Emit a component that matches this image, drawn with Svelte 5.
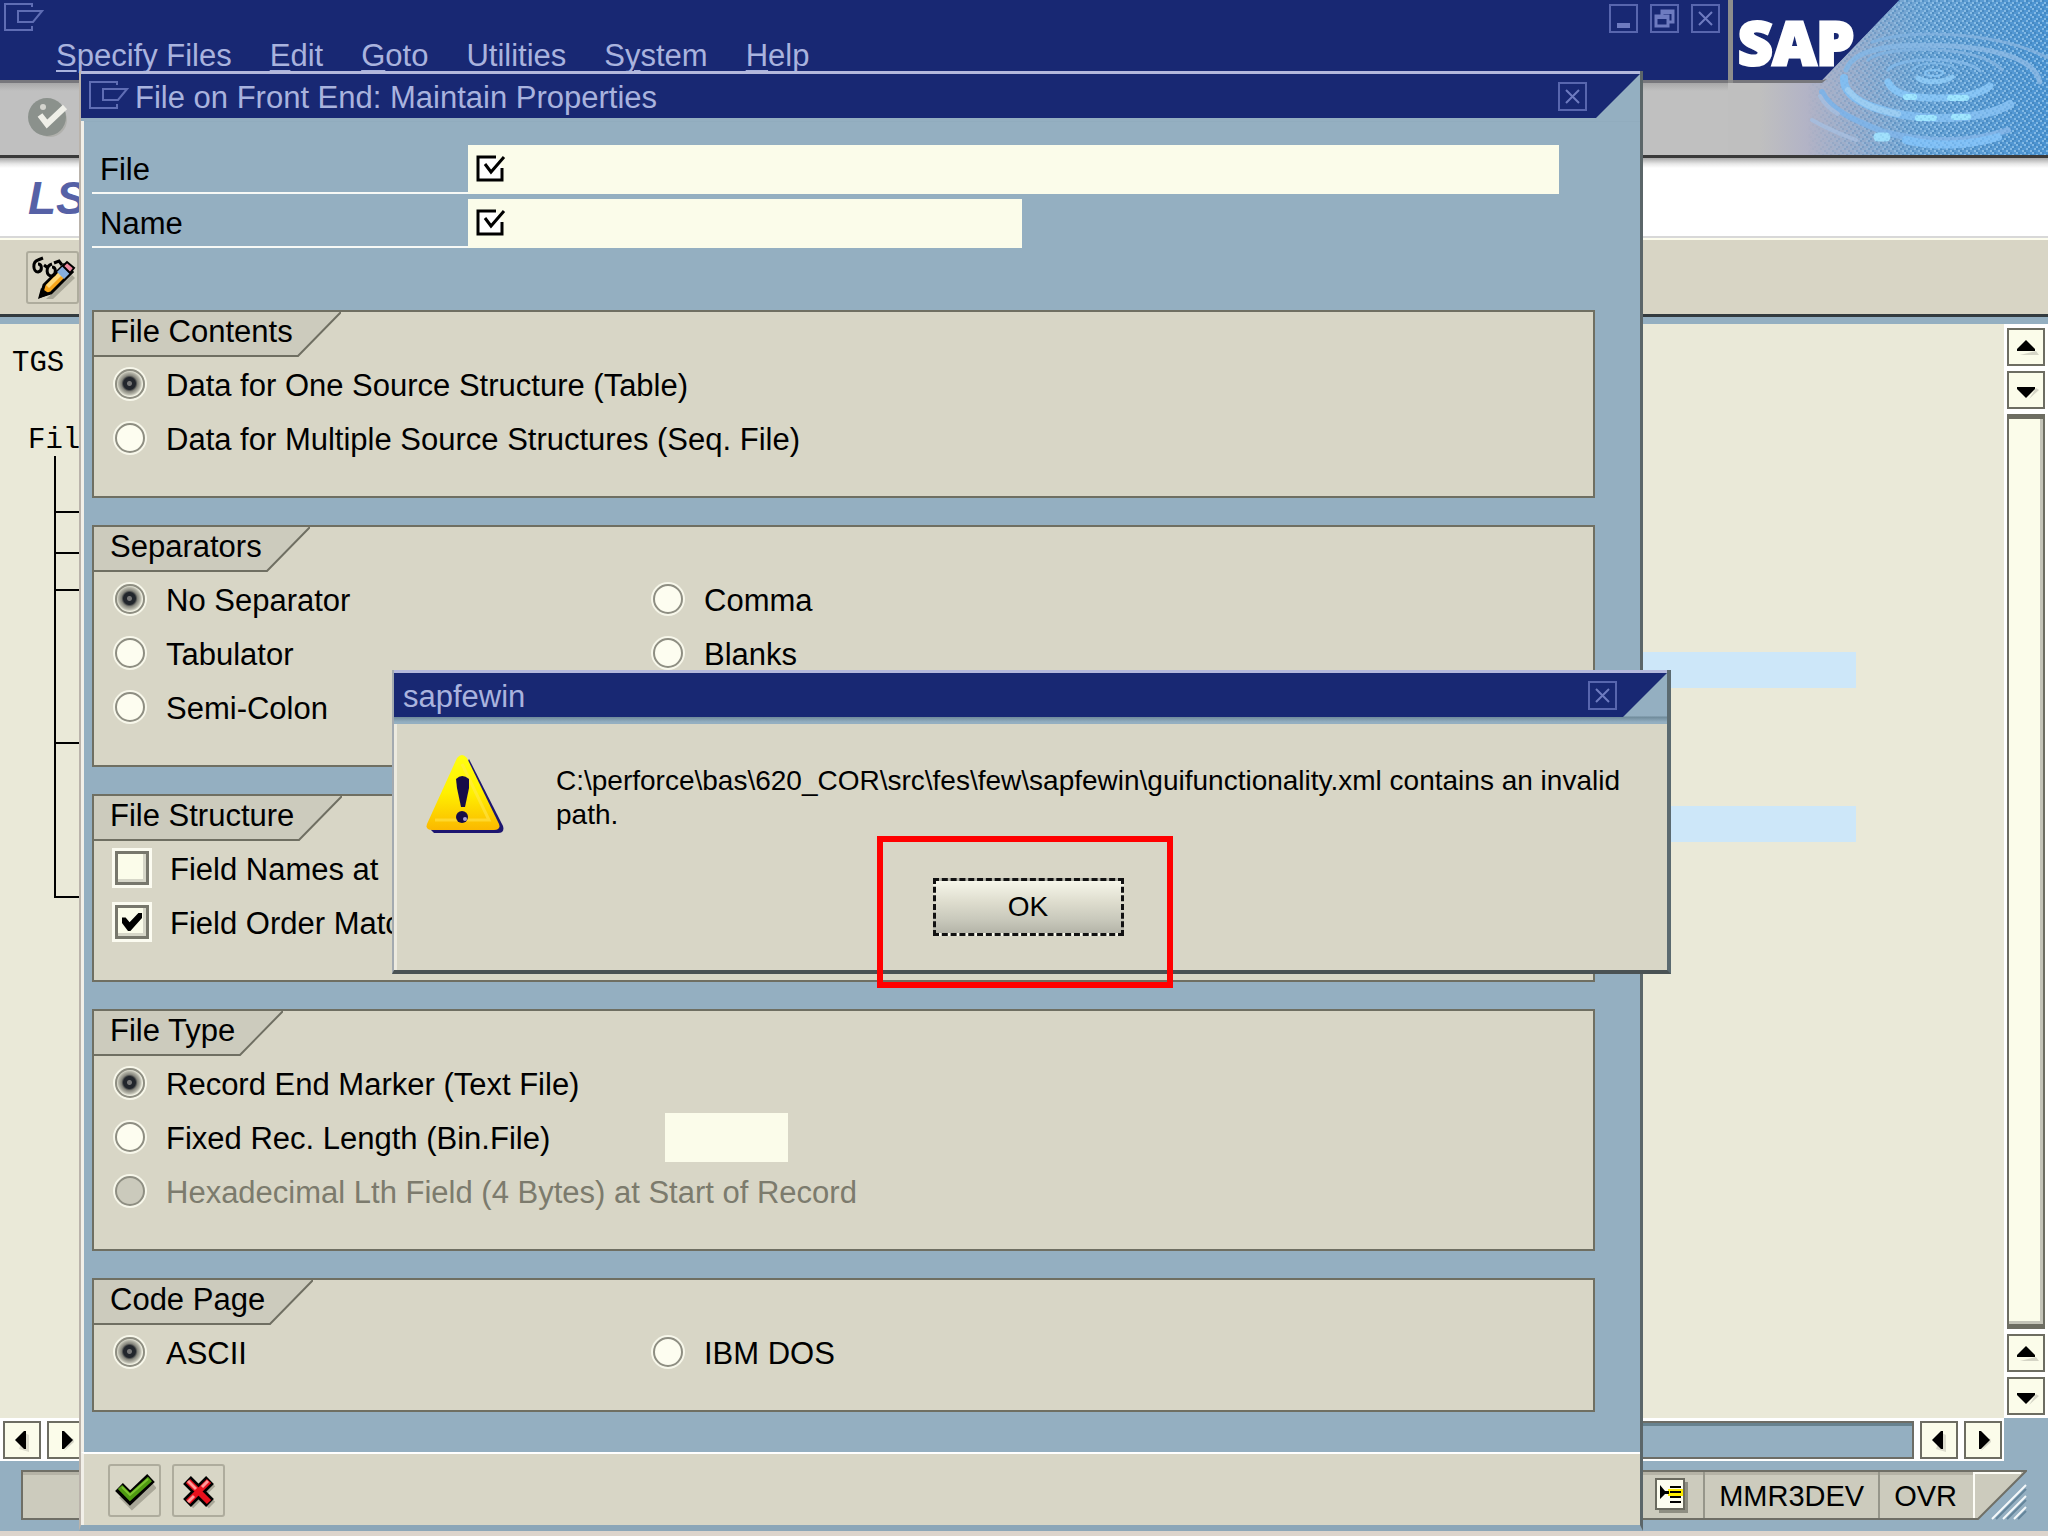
<script>
  const menus = [
    ['', 'S', 'pecify Files'],
    ['', 'E', 'dit'],
    ['', 'G', 'oto'],
    ['Utilities', '', ''],
    ['S', 'y', 'stem'],
    ['', 'H', 'elp']
  ];

  let contents = $state('one');
  let separator = $state('none');
  let fileType = $state('text');
  let codePage = $state('ascii');
  let namesAtStart = $state(false);
  let orderMatches = $state(true);
</script>

{#snippet windowGlyph()}
  <svg class="glyph" width="40" height="30" viewBox="0 0 40 30" aria-hidden="true">
    <path d="M28 4V1H1v26h27v-4M14 8h24l-9 11H14z" fill="none" stroke="currentColor" stroke-width="2" />
  </svg>
{/snippet}

{#snippet closeGlyph()}
  <svg width="25" height="25" viewBox="0 0 25 25" aria-hidden="true">
    <path d="M6 6l13 13M19 6L6 19" stroke="currentColor" stroke-width="2" />
  </svg>
{/snippet}

{#snippet arrow(dir)}
  <button class="arrow" aria-label={'Scroll ' + dir}>
    <svg width="34" height="34" viewBox="0 0 34 34" aria-hidden="true">
      {#if dir === 'up'}
        <path d="M11 25h19l-3-4z" fill="#d5d5c6" /><path d="M8 21v-2l9-9 9 9v2z" />
      {:else if dir === 'down'}
        <path d="M20 26l10-9-3-2z" fill="#d5d5c6" /><path d="M8 14v2l9 9 9-9v-2z" />
      {:else if dir === 'left'}
        <path d="M14 26l10 3V12l-4-2z" fill="#dcdccd" /><path d="M21 8h-2l-9 9 9 9h2z" />
      {:else}
        <path d="M15 28l10-9-1-4z" fill="#d5d5c6" /><path d="M13 8h2l9 9-9 9h-2z" />
      {/if}
    </svg>
  </button>
{/snippet}

{#snippet tab(title)}
  <div class="tab">
    <h2>{title}</h2>
    <svg width="44" height="45" viewBox="0 0 44 45" aria-hidden="true">
      <path d="M0 0h43L1 44H0z" fill="#cccbbd" />
      <path d="M0 44h1L44 0" fill="none" stroke="#6f6f62" stroke-width="2" />
    </svg>
  </div>
{/snippet}

{#snippet requiredMark()}
  <svg width="30" height="28" viewBox="0 0 30 28" aria-hidden="true">
    <path d="M20 2H2v23h24V13" fill="#fff" stroke="#000" stroke-width="3" />
    <path d="M9 9l6 8L28 2" fill="none" stroke="#000" stroke-width="3" />
  </svg>
{/snippet}

<div class="app">
  <header class="menubar">
    <div class="main-glyph">{@render windowGlyph()}</div>
    <nav>
      {#each menus as [before, key, after]}
        <button>{before}{#if key}<u>{key}</u>{/if}{after}</button>
      {/each}
    </nav>
    <div class="window-buttons">
      <button class="winbtn" aria-label="Minimize">
        <svg width="25" height="25" viewBox="0 0 25 25"><path d="M6 17h13v5H6z" fill="currentColor" /></svg>
      </button>
      <button class="winbtn" aria-label="Restore">
        <svg width="25" height="25" viewBox="0 0 25 25">
          <path d="M10 10V5h11v11h-5M4 10h12v10H4z" fill="none" stroke="currentColor" stroke-width="3" />
          <path d="M9 4h13v4H9zM3 9h14v4H3z" fill="currentColor" />
        </svg>
      </button>
      <button class="winbtn" aria-label="Close">{@render closeGlyph()}</button>
    </div>
    <svg class="banner" width="320" height="155" viewBox="0 0 320 155" role="img" aria-label="SAP">
      <defs>
        <linearGradient id="water" x1="0" x2="1" y1="0" y2="0">
          <stop offset="0.1" stop-color="#bfbfbf" />
          <stop offset="0.25" stop-color="#b2b3c6" />
          <stop offset="0.4" stop-color="#98accb" />
          <stop offset="0.6" stop-color="#6aa3d4" />
          <stop offset="1" stop-color="#4a93d2" />
        </linearGradient>
        <linearGradient id="fade" x1="0" x2="1" y1="0" y2="0">
          <stop offset="0.25" stop-color="#000" />
          <stop offset="0.65" stop-color="#fff" />
        </linearGradient>
        <pattern id="dither" width="8" height="8" patternUnits="userSpaceOnUse">
          <path d="M0 0h2v2H0zM4 2h2v2H4zM2 4h2v2H2zM6 6h2v2H6z" fill="#a6d2f2" />
          <path d="M2 0h2v2H2zM6 2h2v2H6zM0 6h2v2H0zM4 4h2v2H4z" fill="#3d80b8" />
        </pattern>
        <mask id="fadeMask"><rect width="320" height="155" fill="url(#fade)" /></mask>
        <clipPath id="waterClip"><path d="M94 80L171 0h149v155H0V80z" /></clipPath>
      </defs>
      <path d="M94 80L171 0h149v155H0V80z" fill="url(#water)" />
      <g mask="url(#fadeMask)"><path d="M94 80L171 0h149v155H0V80z" fill="url(#dither)" opacity="0.5" /></g>
      <g fill="none" stroke-linecap="round" clip-path="url(#waterClip)">
        <ellipse cx="206" cy="73" rx="9" ry="3" stroke="#85c2f2" stroke-width="2" />
        <path d="M190 78c6 5 26 5 34-1" stroke="#8cc8f4" stroke-width="5" />
        <path d="M184 70c8-9 38-9 46 1" stroke="#7db6e6" stroke-width="2" />
        <path d="M160 82c6 14 28 16 50 16 24 0 42-4 52-12" stroke="#86c4f5" stroke-width="7" />
        <path d="M160 70c8-13 76-15 92 1" stroke="#80b6e6" stroke-width="3" />
        <path d="M116 78c-2 26 50 39 94 40 30 0 56-4 72-14" stroke="#82bdf0" stroke-width="8" />
        <path d="M140 60c16-15 112-16 134 10" stroke="#80b2e0" stroke-width="3" />
        <path d="M118 70c10-26 62-26 106-24 44 3 82 12 88 36" stroke="#85b5e2" stroke-width="5" />
        <path d="M120 90c12 15 30 20 50 24" stroke="#9ccdf2" stroke-width="6" />
        <path d="M178 97h8M222 98h16M190 118h16M226 117h14" stroke="#9fe6ff" stroke-width="6" />
        <path d="M94 92c8 18 32 28 62 40 44 12 90 10 124-2" stroke="#80b3e6" stroke-width="6" />
        <path d="M178 140c28 7 62 6 92-3" stroke="#80c0f6" stroke-width="8" />
        <path d="M150 137h8" stroke="#a0e0fc" stroke-width="9" />
        <path d="M144 42c40-14 126-10 176 16" stroke="#7fb0de" stroke-width="3" />
        <path d="M84 120c14 8 28 14 44 20M92 96c4 8 10 13 18 18" stroke="#a6bcdc" stroke-width="4" />
      </g>
      <g mask="url(#fadeMask)"><path d="M94 80L171 0h149v155H0V80z" fill="url(#dither)" opacity="0.18" /></g>
      <path d="M0 0h5v83H0z" fill="#8d8d8d" />
      <path d="M5 80h90l4-1-5 4H5z" fill="#77777c" />
      <path d="M5 0h166L94 80H5z" fill="#182873" />
      <text class="logo" x="10" y="65">SAP</text>
    </svg>
  </header>

  <div class="commandbar">
    <svg width="40" height="40" viewBox="0 0 40 40" role="img" aria-label="Enter">
      <circle cx="22" cy="23" r="17" fill="#b0b0ac" />
      <circle cx="19" cy="20" r="19" fill="#8b918c" />
      <circle cx="15" cy="10" r="3" fill="#d4d4ce" />
      <path d="M12 18l7 9L37 10" fill="none" stroke="#efefe8" stroke-width="6" />
    </svg>
  </div>
  <h1 class="page-title">LS</h1>
  <div class="toolbar">
    <button class="tool" aria-label="Display or change">
      <svg width="46" height="46" viewBox="0 0 46 46" aria-hidden="true">
        <path d="M16 44l26-24 3 3-22 21z" fill="#a9a798" />
        <path d="M11 41l3-11 20-20 8 7-21 21z" fill="#f6a51c" stroke="#000" stroke-width="3" />
        <path d="M16 30l14-14 3 3-14 14z" fill="#ffd97a" />
        <path d="M27 17l7-7 7 7-7 7z" fill="#86aede" />
        <path d="M33 11l4-4 7 6-4 5z" fill="#f08aa0" stroke="#000" stroke-width="2" />
        <path d="M8 44l3-11 9 6z" fill="#000" />
        <path d="M8 5c-6 2-5 12 0 12 5-1 4-8 0-8M14 10l4 3M22 9c-7 2-6 13 0 12 5-2 4-9 0-9M8 5l5-2M24 8l5-2 3 4" fill="none" stroke="#000" stroke-width="3" />
      </svg>
    </button>
  </div>

  <main class="workspace">
    <div class="tree">
      <p class="root">TGS</p>
      <p class="node">Fil</p>
      <svg width="60" height="442" viewBox="0 0 60 442" aria-hidden="true">
        <path d="M1 0v441h59M1 56h59M1 97h59M1 134h59M1 287h59" fill="none" stroke="#000" stroke-width="2" />
      </svg>
    </div>
    <div class="marks"><i></i><i></i></div>
    <div class="vscroll">
      {@render arrow('up')}
      {@render arrow('down')}
      <div class="thumb"></div>
      {@render arrow('up')}
      {@render arrow('down')}
    </div>
  </main>

  <div class="hscroll-row">
    <div class="hscroll">
      {@render arrow('left')}
      {@render arrow('right')}
      <div class="track"></div>
      {@render arrow('left')}
      {@render arrow('right')}
    </div>
  </div>

  <footer class="status">
    <div class="status-box">
      <div class="seg message"></div>
      <div class="seg">
        <svg width="34" height="36" viewBox="0 0 34 36" aria-hidden="true">
          <path d="M4 4h29v31H4z" fill="#8e8e82" />
          <path d="M1 1h28v30H1z" fill="#fdfdf0" stroke="#6b6b60" stroke-width="2" />
          <path d="M13 11h15v7H13z" fill="#ffee00" />
          <path d="M5 7v14l5-5h4v-3h-4zM15 8h11v2H15zM15 13h11v2H15zM15 18h11v2H15zM15 23h11v2H15z" />
        </svg>
      </div>
      <div class="seg">MMR3DEV</div>
      <div class="seg last">OVR</div>
    </div>
    <svg class="grip" width="54" height="50" viewBox="0 0 54 50" aria-hidden="true">
      <path d="M0 0h54L5 50H0z" fill="#cccbbd" />
      <path d="M0 1h53L5 49H0" fill="none" stroke="#6f6f66" stroke-width="2" />
      <path d="M1 48V3h47" fill="none" stroke="#fdfdf6" stroke-width="2" />
      <path d="M19 49l34-34M30 49l23-23M41 49l12-12" stroke="#f4f8fa" stroke-width="2" />
      <path d="M23 49l30-30M34 49l19-19M45 49l8-8" stroke="#64859b" stroke-width="2" />
    </svg>
  </footer>

  <section class="dialog" aria-label="File on Front End: Maintain Properties">
    <div class="titlebar">
      <div class="title-fill">
        {@render windowGlyph()}
        <span class="title">File on Front End: Maintain Properties</span>
        <button class="winbtn" aria-label="Close dialog">{@render closeGlyph()}</button>
      </div>
    </div>
    <form class="body" onsubmit={(e) => e.preventDefault()}>
      <div class="field">
        <label for="file">File</label>
        <div class="entry">{@render requiredMark()}<input id="file" type="text" /></div>
      </div>
      <div class="field">
        <label for="name">Name</label>
        <div class="entry short">{@render requiredMark()}<input id="name" type="text" /></div>
      </div>

      <div class="groups">
        <section class="group">
          {@render tab('File Contents')}
          <div class="rows">
            <label><input type="radio" value="one" bind:group={contents} /><span>Data for One Source Structure (Table)</span></label>
            <label><input type="radio" value="many" bind:group={contents} /><span>Data for Multiple Source Structures (Seq. File)</span></label>
          </div>
        </section>

        <section class="group">
          {@render tab('Separators')}
          <div class="rows two">
            <label><input type="radio" value="none" bind:group={separator} /><span>No Separator</span></label>
            <label><input type="radio" value="comma" bind:group={separator} /><span>Comma</span></label>
            <label><input type="radio" value="tab" bind:group={separator} /><span>Tabulator</span></label>
            <label><input type="radio" value="blank" bind:group={separator} /><span>Blanks</span></label>
            <label><input type="radio" value="semi" bind:group={separator} /><span>Semi-Colon</span></label>
          </div>
        </section>

        <section class="group">
          {@render tab('File Structure')}
          <div class="rows">
            <label><input type="checkbox" bind:checked={namesAtStart} /><span>Field Names at</span></label>
            <label><input type="checkbox" bind:checked={orderMatches} /><span>Field Order Matc</span></label>
          </div>
        </section>

        <section class="group">
          {@render tab('File Type')}
          <div class="rows">
            <label><input type="radio" value="text" bind:group={fileType} /><span>Record End Marker (Text File)</span></label>
            <div class="with-input">
              <label><input type="radio" value="bin" bind:group={fileType} /><span>Fixed Rec. Length (Bin.File)</span></label>
              <input class="length" type="text" aria-label="Record length" />
            </div>
            <label class="disabled"><input type="radio" value="hex" disabled bind:group={fileType} /><span>Hexadecimal Lth Field (4 Bytes) at Start of Record</span></label>
          </div>
        </section>

        <section class="group">
          {@render tab('Code Page')}
          <div class="rows two">
            <label><input type="radio" value="ascii" bind:group={codePage} /><span>ASCII</span></label>
            <label><input type="radio" value="dos" bind:group={codePage} /><span>IBM DOS</span></label>
          </div>
        </section>
      </div>
    </form>
    <div class="dialog-actions">
      <button class="tool" aria-label="Continue">
        <svg width="42" height="40" viewBox="0 0 42 40" aria-hidden="true">
          <path d="M8 24l10 10L40 14" fill="none" stroke="#a9a798" stroke-width="8" />
          <path d="M5 16l11 11L37 7" fill="none" stroke="#000" stroke-width="11" />
          <path d="M6 16l10 10L36 8" fill="none" stroke="#4f9a12" stroke-width="6" />
          <path d="M8 16l8 8L34 8" fill="none" stroke="#7cc330" stroke-width="2" />
        </svg>
      </button>
      <button class="tool" aria-label="Cancel">
        <svg width="42" height="40" viewBox="0 0 42 40" aria-hidden="true">
          <path d="M12 12l22 22M34 12L12 34" stroke="#a9a798" stroke-width="9" />
          <path d="M9 9l23 23M32 9L9 32" stroke="#000" stroke-width="11" />
          <path d="M10 10l21 21M31 10L10 31" stroke="#e8101c" stroke-width="6" />
          <path d="M10 10l8 8M30 10l-6 6M10 31l6-6" stroke="#ff9a9a" stroke-width="3" />
        </svg>
      </button>
    </div>
  </section>

  <section class="popup" role="alertdialog" aria-label="sapfewin">
    <div class="titlebar">
      <div class="title-fill">
        <span class="title">sapfewin</span>
        <button class="winbtn" aria-label="Close message">{@render closeGlyph()}</button>
      </div>
    </div>
    <div class="notice">
      <svg width="80" height="80" viewBox="0 0 80 80" role="img" aria-label="Warning">
        <defs>
          <linearGradient id="warn" x1="0" x2="0" y1="0" y2="1">
            <stop offset="0" stop-color="#ffff10" />
            <stop offset="0.5" stop-color="#fff000" />
            <stop offset="1" stop-color="#fbb800" />
          </linearGradient>
        </defs>
        <path d="M43 5l34 67q2 7-5 7H8l-3-3z" fill="#1d1670" />
        <path d="M31 4q5-6 10 0l32 66q2 6-5 6H6q-7 0-5-6z" fill="url(#warn)" />
        <path d="M36 10L63 66H9" fill="none" stroke="#ffe95a" stroke-width="3" opacity="0.5" />
        <path d="M30 25q6-6 13 0v9l-4 19h-4l-4-19z" fill="#160c48" />
        <circle cx="36" cy="63" r="6" fill="#160c48" />
        <circle cx="39" cy="65" r="2" fill="#a8a0d8" />
      </svg>
      <p>C:\perforce\bas\620_COR\src\fes\few\sapfewin\guifunctionality.xml contains an invalid path.</p>
    </div>
    <div class="popup-actions">
      <div class="callout"><button class="ok">OK</button></div>
    </div>
  </section>
</div>

<style>
  :global(body) {
    background: #fff;
  }
  * {
    box-sizing: border-box;
  }
  .app {
    position: relative;
    display: flex;
    flex-direction: column;
    min-height: 100vh;
    overflow: hidden;
    border-bottom: 5px solid #dcd4cc;
    background: #94afc1;
    font-family: 'Liberation Sans', Arial, sans-serif;
    font-size: 31px;
    line-height: 36px;
    color: #000;
  }
  button,
  input {
    font: inherit;
    color: inherit;
    margin: 0;
    padding: 0;
    border: 0;
    background: none;
    border-radius: 0;
  }
  svg {
    display: block;
    flex: none;
  }
  h1,
  h2,
  p {
    margin: 0;
    font-weight: normal;
    font-size: inherit;
  }

  .menubar {
    position: relative;
    display: flex;
    align-items: flex-start;
    height: 83px;
    background: #182873;
    border-bottom: 3px solid #77777c;
    color: #a9b3de;
  }
  .glyph {
    color: #5f6db4;
  }
  .main-glyph {
    padding: 3px 0 0 4px;
    width: 56px;
  }
  nav {
    display: flex;
    gap: 38px;
    padding-top: 38px;
    flex: 1;
  }
  nav u {
    text-decoration-thickness: 2px;
    text-underline-offset: 4px;
  }
  .window-buttons {
    display: flex;
    gap: 12px;
    padding: 4px 328px 0 0;
  }
  .winbtn {
    display: block;
    width: 29px;
    height: 29px;
    border: 2px solid #5866ae;
    color: #6e7bc0;
  }
  .banner {
    position: absolute;
    top: 0;
    right: 0;
    z-index: 1;
  }
  .logo {
    font-family: 'Open Sans', sans-serif;
    font-weight: 800;
    font-size: 60px;
    fill: #fff;
    stroke: #fff;
    stroke-width: 3px;
  }

  .commandbar {
    height: 75px;
    padding: 14px 28px;
    background: linear-gradient(#a8a8a8, #c0c0c0 8px);
    border-bottom: 3px solid #3a3a3a;
  }
  .page-title {
    height: 82px;
    padding: 12px 28px;
    line-height: 56px;
    font-size: 46px;
    font-weight: bold;
    font-style: italic;
    color: #5661a6;
    background: linear-gradient(#a8a8a8, #e8e8e8 6px, #fff 10px);
    border-bottom: 2px solid #fdfdee;
    box-shadow: inset 0 -2px #d8d8d8;
  }
  .toolbar {
    height: 77px;
    padding: 11px 26px;
    background: #d8d5c5;
    border-bottom: 3px solid #333b3f;
  }
  .tool {
    display: flex;
    align-items: center;
    justify-content: center;
    width: 53px;
    height: 53px;
    border: 2px solid #aeac9d;
    border-radius: 3px;
  }

  .workspace {
    display: flex;
    flex: 1;
    margin-top: 7px;
    background: #eae9d8;
  }
  .tree {
    font-family: 'Liberation Mono', monospace;
    font-size: 29px;
    line-height: 36px;
    padding: 22px 0 0 12px;
  }
  .node {
    padding: 41px 0 0 16px;
  }
  .tree svg {
    margin: -3px 0 0 42px;
  }
  .marks {
    flex: 1;
    display: flex;
    flex-direction: column;
    gap: 118px;
    padding: 328px 148px 0 0;
  }
  .marks i {
    height: 36px;
    background: #cde7f9;
  }
  .vscroll {
    display: flex;
    flex-direction: column;
    gap: 5px;
    width: 44px;
    padding: 4px 3px 3px;
    background: #fff;
  }
  .arrow {
    display: block;
    flex: none;
    width: 38px;
    height: 38px;
    border: 2px solid #6d6d62;
    background: #fbfcea;
  }
  .thumb {
    flex: 1;
    border: 2px solid #6d6d62;
    border-width: 5px 2px;
    background: #fbfcea;
    box-shadow: inset -3px -3px #c4c4b8;
  }
  .hscroll-row {
    padding-right: 44px;
  }
  .hscroll {
    display: flex;
    gap: 6px;
    padding: 3px 2px 2px 3px;
    background: #fff;
  }
  .track {
    flex: 1;
    border: 2px solid #6d6d66;
    background: #94afc1;
    box-shadow: inset 0 3px #67828f;
  }

  .status {
    display: flex;
    height: 70px;
    padding: 9px 21px 11px;
  }
  .status-box {
    display: flex;
    flex: 1;
    border: 2px solid #6f6f66;
    border-right: 0;
    background: #cccbbd;
    font-size: 29px;
  }
  .seg {
    display: flex;
    align-items: center;
    padding: 2px 14px 0;
    border-right: 2px solid #96968a;
    box-shadow: inset 0 3px #b5b3a6;
  }
  .message {
    flex: 1;
  }
  .last {
    border-right: 0;
    padding-right: 16px;
  }

  .titlebar {
    height: 50px;
    border-top: 3px solid #b3b8dc;
    background: #94afc1;
  }
  .title-fill {
    display: flex;
    align-items: center;
    height: 44px;
    padding-right: 53px;
    background: #182873;
    color: #a9b3de;
    clip-path: polygon(0 0, 100% 0, calc(100% - 44px) 100%, 0 100%);
  }
  .title {
    flex: 1;
    padding-top: 4px;
  }

  .dialog {
    position: absolute;
    top: 71px;
    left: 79px;
    right: 405px;
    bottom: 0;
    z-index: 2;
    display: flex;
    flex-direction: column;
    background: #94afc1;
    border-left: 2px solid #bab3ab;
    border-right: 3px solid #5b6669;
    border-bottom: 6px solid #8ba6b8;
  }
  .dialog .glyph {
    margin: 0 6px 0 8px;
  }
  .body {
    flex: 1;
    padding: 24px 45px 0 8px;
    border-left: 3px solid #f1efe8;
    background: linear-gradient(#7c98a8, #94afc1 4px);
    margin-top: -3px;
    padding-top: 27px;
  }
  .dialog .titlebar {
    position: relative;
  }
  .field {
    display: flex;
    height: 49px;
    margin: 0 36px 5px 0;
  }
  .field label {
    width: 376px;
    padding: 7px 8px 0;
    border-bottom: 2px solid #f7f9f6;
  }
  .entry {
    display: flex;
    align-items: center;
    flex: 1;
    padding: 0 0 2px 8px;
    background: #fbfcea;
  }
  .entry.short {
    flex: none;
    width: 554px;
  }
  .entry input {
    flex: 1;
    min-width: 0;
    height: 100%;
    padding-left: 8px;
    outline: none;
  }
  .groups {
    display: flex;
    flex-direction: column;
    gap: 27px;
    padding-top: 57px;
  }
  .group {
    border: 2px solid #6f6f62;
    background: #d8d6c6;
    padding-bottom: 31px;
  }
  .tab {
    display: flex;
    height: 45px;
  }
  h2 {
    padding: 2px 4px 0 16px;
    line-height: 36px;
    background: #cccbbd;
    border-bottom: 2px solid #6f6f62;
  }
  .rows {
    display: grid;
    grid-auto-rows: 54px;
    padding-left: 21px;
  }
  .two {
    grid-template-columns: 538px 1fr;
  }
  .rows label {
    display: flex;
    align-items: center;
    gap: 21px;
    white-space: nowrap;
  }
  .rows span {
    padding-top: 3px;
  }
  .with-input {
    display: flex;
    align-items: center;
  }
  .with-input label {
    width: 550px;
  }
  .length {
    width: 123px;
    height: 49px;
    background: #fbfcea;
    padding: 0 8px;
  }
  input[type='radio'] {
    appearance: none;
    flex: none;
    width: 30px;
    height: 30px;
    border: 2px solid #8e8e82;
    border-radius: 50%;
    background: #fdfdf0;
    box-shadow: 0 0 0 2px #f7f7ea;
  }
  input[type='radio']:checked {
    background: radial-gradient(circle at 48% 48%, #777 0 2px, #22262c 3px 6px, #85857c 8px, #b9b9ac 11px, #f4f4e6 13px);
  }
  input[type='radio']:disabled {
    background: #cbcabc;
  }
  .disabled {
    color: #7c7b6d;
  }
  input[type='checkbox'] {
    appearance: none;
    flex: none;
    width: 34px;
    height: 34px;
    border: 3px solid #77776c;
    background: #fbfcea;
    box-shadow: 0 0 0 3px #fbfbf0, inset -3px -3px #d6d6c8;
  }
  input[type='checkbox']:checked::before {
    content: '';
    display: block;
    width: 20px;
    height: 18px;
    margin: 5px 4px;
    background: #000;
    clip-path: polygon(0 25%, 18% 25%, 38% 52%, 82% 0, 100% 0, 100% 28%, 42% 100%, 30% 100%, 0 55%);
  }
  .dialog-actions {
    display: flex;
    gap: 11px;
    padding: 10px 24px 8px;
    background: #d8d6c6;
    border-top: 2px solid #fff;
    border-left: 3px solid #f1efe8;
  }

  .popup {
    position: absolute;
    top: 670px;
    left: 392px;
    right: 377px;
    z-index: 3;
    background: #d8d6c6;
    border-left: 2px solid #a3aab0;
    border-right: 4px solid #5b6a70;
    border-bottom: 4px solid #4a5254;
  }
  .popup .titlebar {
    height: 54px;
    background: linear-gradient(#94afc1 43px, #6f8a9a 44px, #94afc1 49px);
  }
  .popup .title-fill {
    padding-right: 50px;
  }
  .popup .title {
    padding-left: 9px;
  }
  .notice {
    display: flex;
    padding: 30px 24px 0 29px;
    border-left: 3px solid #eceadf;
  }
  .notice p {
    padding: 10px 0 0 50px;
    font-size: 28px;
    line-height: 34px;
  }
  .popup-actions {
    display: flex;
    justify-content: center;
    padding: 44px 8px 34px 0;
    border-left: 3px solid #eceadf;
  }
  .callout {
    position: relative;
  }
  .callout::after {
    content: '';
    position: absolute;
    inset: -42px -49px -52px -56px;
    border: 6px solid #f00;
    pointer-events: none;
  }
  .ok {
    display: block;
    width: 191px;
    height: 58px;
    border: 3px dashed #111;
    background: linear-gradient(#f6f6ea, #deddce 40%, #c8c8bb 75%, #b4b4a8);
    font-size: 28px;
  }
</style>
